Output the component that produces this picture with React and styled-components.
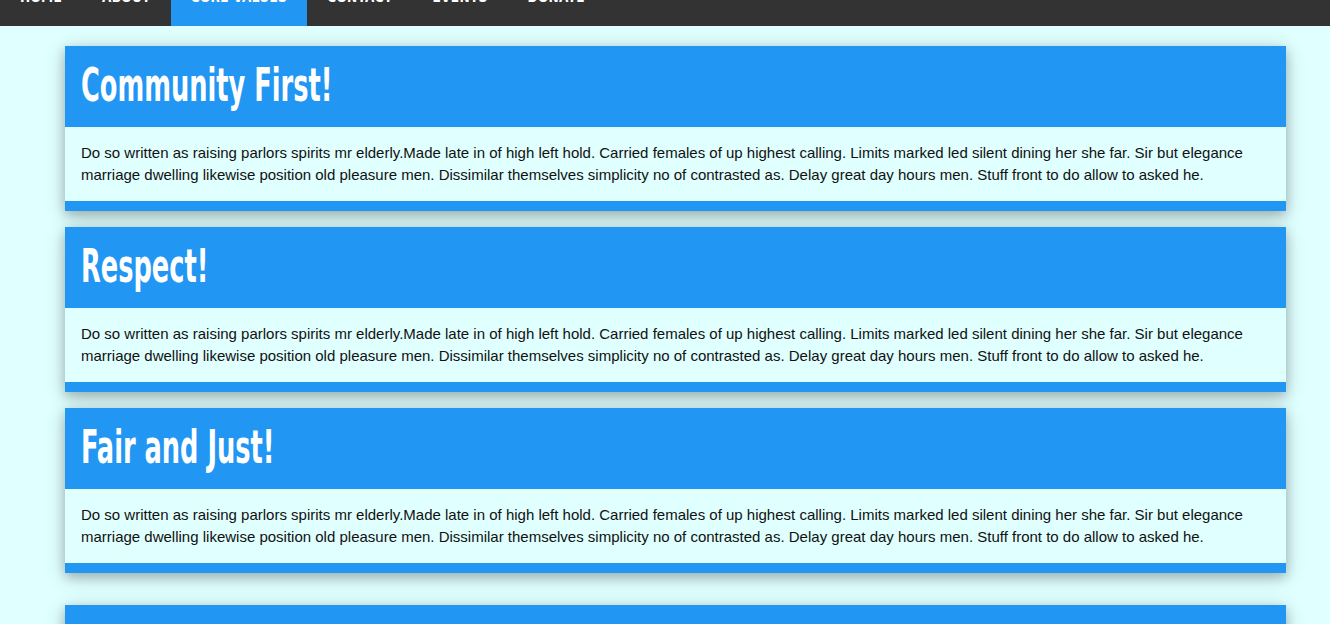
import React from 'react';
import styled, { createGlobalStyle } from 'styled-components';

const GlobalStyle = createGlobalStyle`
    html, body {
        margin: 0;
        padding: 0;
        background: #e0ffff;
        overflow: hidden;
    }
    body {
        font-family: "Liberation Sans", Arial, sans-serif;
    }
`;

const NavBar = styled.nav`
    display: flex;
    background: #333;
    margin-top: -28px;
`;

const NavItem = styled.a`
    display: block;
    padding: 14px 20px 18px;
    line-height: 22px;
    font-family: "DejaVu Sans Condensed", sans-serif;
    font-weight: bold;
    font-size: 13.5px;
    letter-spacing: 0.3px;
    color: #fff;
    text-transform: uppercase;
    text-decoration: none;
    background: ${props => (props.active ? '#2196f3' : 'transparent')};
`;

const Main = styled.main`
    display: flex;
    flex-direction: column;
    padding: 20px 44px 0 65px;
`;

const Card = styled.section`
    margin-bottom: ${props => (props.wide ? '32px' : '16px')};
    background: #e0ffff;
    border-bottom: 10px solid #2196f3;
    box-shadow: 0 4px 10px 0 rgba(0, 0, 0, 0.2), 0 4px 20px 0 rgba(0, 0, 0, 0.19);
`;

const CardHead = styled.header`
    height: 81px;
    background: #2196f3;
    padding: 0 16px;
    overflow: hidden;
`;

// condensed display face, squeezed to match the narrow headline look
const Title = styled.h2`
    margin: 0;
    padding-top: 11px;
    font-family: "DejaVu Sans Condensed", sans-serif;
    font-weight: bold;
    font-size: 46px;
    line-height: 56px;
    color: #fff;
    white-space: nowrap;
    transform: scaleX(0.62);
    transform-origin: left center;
`;

const Text = styled.p`
    margin: 0;
    padding: 15px 16px;
    font-size: 15px;
    line-height: 22px;
    color: #111;
`;

const links = ['Home', 'About', 'Core Values', 'Contact', 'Events', 'Donate'];

const copy = 'Do so written as raising parlors spirits mr elderly.Made late in of high left hold. Carried females of up highest calling. Limits marked led silent dining her she far. Sir but elegance marriage dwelling likewise position old pleasure men. Dissimilar themselves simplicity no of contrasted as. Delay great day hours men. Stuff front to do allow to asked he.';

const values = ['Community First!', 'Respect!', 'Fair and Just!'];

const App = () => {
    return (
        <>
            <GlobalStyle />
            <NavBar>
                {links.map(link => (
                    <NavItem key={link} href="#" active={link === 'Core Values' ? 1 : 0}>{link}</NavItem>
                ))}
            </NavBar>
            <Main>
                {values.map((value, index) => (
                    <Card key={value} wide={index === values.length - 1 ? 1 : 0}>
                        <CardHead>
                            <Title>{value}</Title>
                        </CardHead>
                        <Text>{copy}</Text>
                    </Card>
                ))}
                <Card>
                    <CardHead>
                        <Title>Unity!</Title>
                    </CardHead>
                    <Text>{copy}</Text>
                </Card>
            </Main>
        </>
    );
};

export default App;
